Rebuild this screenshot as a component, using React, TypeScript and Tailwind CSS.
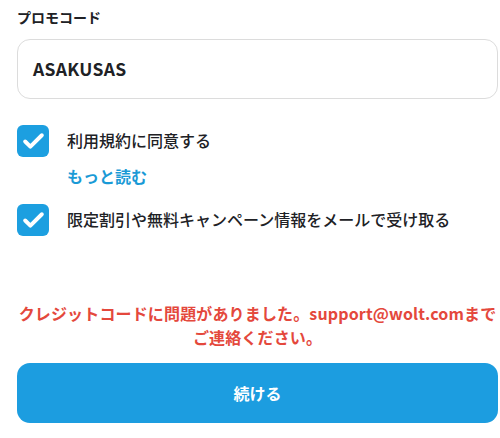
import { Check } from 'lucide-react';

const font = { fontFamily: '"Noto Sans CJK JP", "Noto Sans", sans-serif' };

const CheckBox = () => (
  <div className="flex h-[32px] w-[32px] shrink-0 items-center justify-center rounded-[6px] bg-[#1c9fe0]">
    <Check className="h-[25px] w-[25px] text-white" strokeWidth={3.75} />
  </div>
);

export default function App() {
  return (
    <div
      className="h-[438px] w-[500px] overflow-hidden bg-white pl-[17px] pr-[2px] text-[#202125]"
      style={font}
    >
      {/* Promo code */}
      <div className="pt-[7px] text-[14px] font-bold leading-[20px]">プロモコード</div>
      <div className="mt-[12px] flex h-[60px] items-center rounded-[13px] border border-[#dcdcdc] px-[15px]">
        <span className="text-[17.5px] font-bold tracking-[0.3px]">ASAKUSAS</span>
      </div>

      {/* Terms */}
      <div className="mt-[26px] flex items-start gap-[18px]">
        <CheckBox />
        <div className="flex flex-col">
          <span className="pt-[3px] text-[16px] font-medium leading-[24px]">利用規約に同意する</span>
          <span className="mt-[14px] text-[16px] font-bold leading-[20px] text-[#1a9ad6]">もっと読む</span>
        </div>
      </div>

      {/* Newsletter */}
      <div className="mt-[18px] flex items-start gap-[18px]">
        <CheckBox />
        <span className="pt-[3px] text-[16px] font-medium leading-[24px]">
          限定割引や無料キャンペーン情報をメールで受け取る
        </span>
      </div>

      {/* Error */}
      <p className="mt-[65px] whitespace-nowrap text-center text-[16px] font-semibold leading-[24px] tracking-[0.15px] text-[#e4483c]">
        クレジットコードに問題がありました。support@wolt.comまで
        <br />
        ご連絡ください。
      </p>

      {/* Continue */}
      <button className="mt-[14px] flex h-[60px] w-full items-center justify-center rounded-[13px] bg-[#1c9de0] text-[16px] font-bold text-white">
        続ける
      </button>
    </div>
  );
}
